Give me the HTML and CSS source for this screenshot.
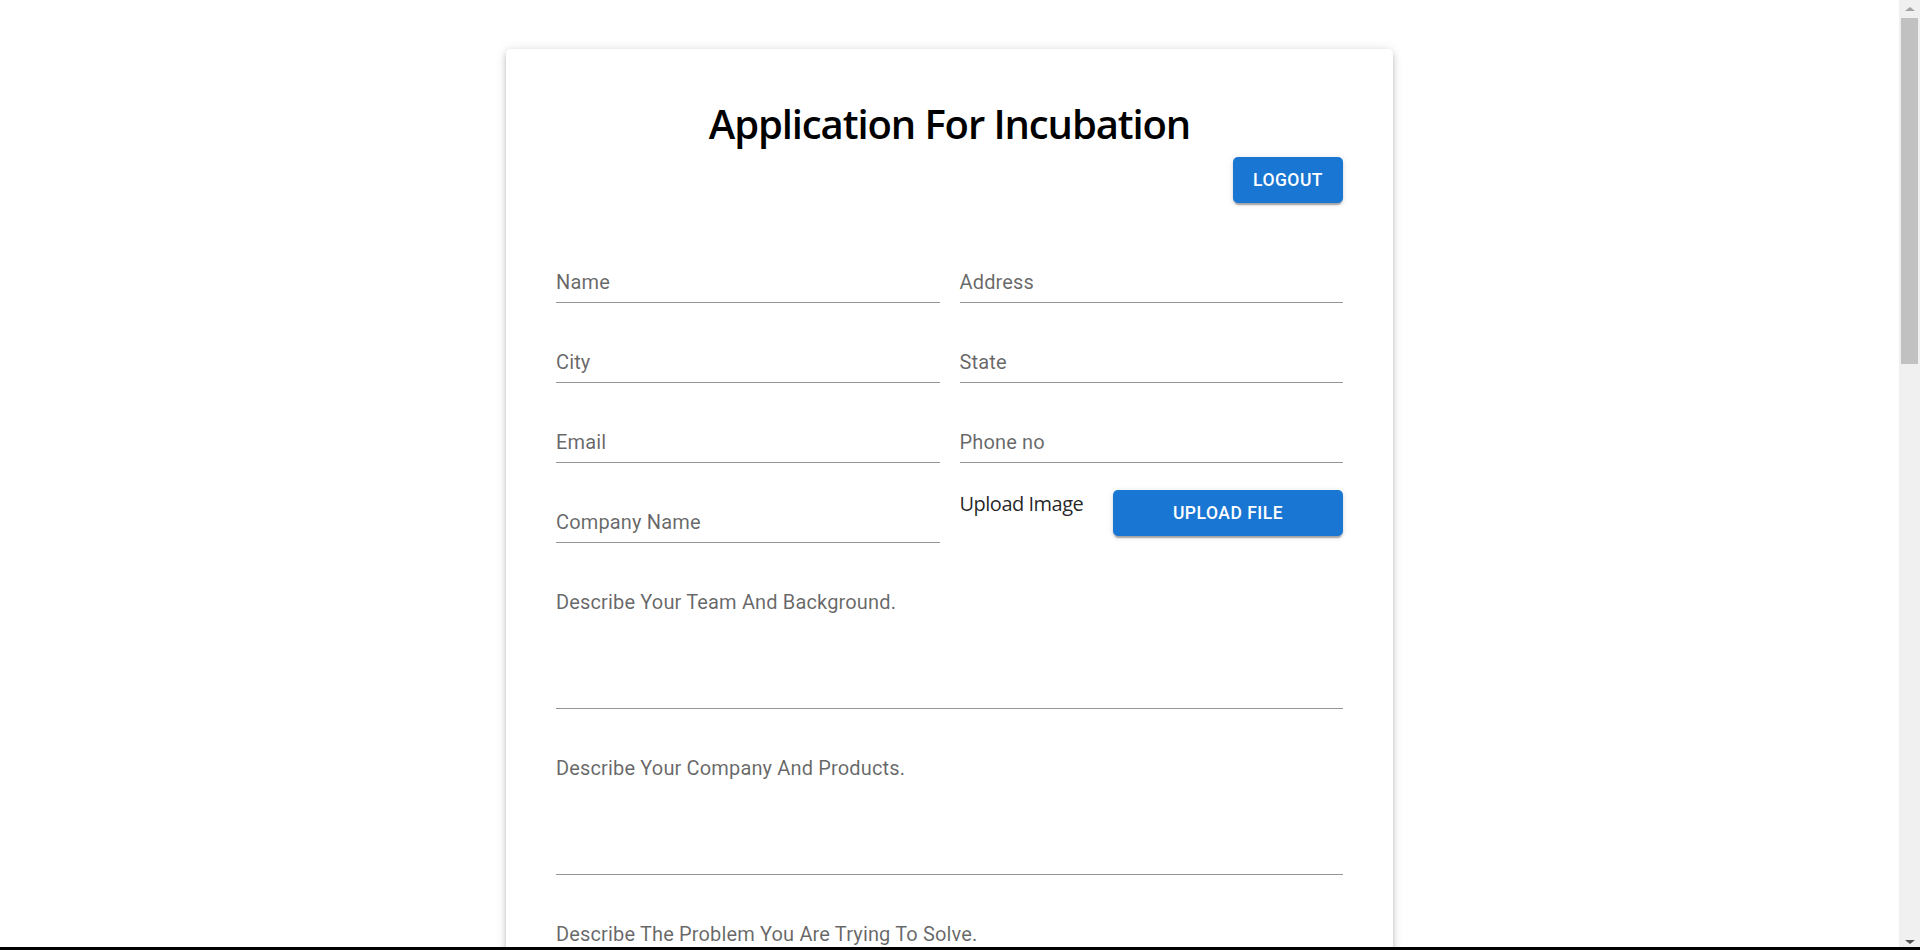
FILE: index.html
```html
<!DOCTYPE html>
<html lang="en">
<head>
<meta charset="utf-8">
<title>Application For Incubation</title>
<link rel="stylesheet" href="styles.css">
</head>
<body>
<div class="page">
  <main class="card">
    <h1 class="title">Application For Incubation</h1>
    <div class="actions">
      <button class="btn btn-logout" type="button">Logout</button>
    </div>
    <form class="form">
      <div class="field"><span class="label">Name</span></div>
      <div class="field"><span class="label">Address</span></div>
      <div class="field"><span class="label">City</span></div>
      <div class="field"><span class="label">State</span></div>
      <div class="field"><span class="label">Email</span></div>
      <div class="field"><span class="label">Phone no</span></div>
      <div class="field"><span class="label">Company Name</span></div>
      <div class="upload">
        <span class="upload-label">Upload Image</span>
        <button class="btn btn-upload" type="button">Upload File</button>
      </div>
      <div class="field multi"><span class="label">Describe Your Team And Background.</span></div>
      <div class="field multi"><span class="label">Describe Your Company And Products.</span></div>
      <div class="field multi"><span class="label">Describe The Problem You Are Trying To Solve.</span></div>
      <div class="field multi"><span class="label">What Is Unique About Your Solution?</span></div>
    </form>
  </main>
</div>
<div class="scrollbar">
  <div class="sb-arrow sb-up"></div>
  <div class="sb-track"><div class="sb-thumb"></div></div>
  <div class="sb-arrow sb-down"></div>
</div>
<div class="bottom-edge"></div>
</body>
</html>
```
FILE: styles.css
```css
html, body {
  margin: 0;
  padding: 0;
  height: 100%;
  overflow: hidden;
  background: #ffffff;
}

body {
  font-family: "Open Sans", "Noto Sans", sans-serif;
}

.page {
  width: calc(100% - 21px);
  height: 100%;
}

.card {
  width: 887px;
  box-sizing: border-box;
  margin: 49px auto 0;
  padding: 50px 50px 60px;
  background: #fff;
  border-radius: 5px;
  box-shadow: 0 3px 4px -2px rgba(0,0,0,0.2), 0 3px 6px 0 rgba(0,0,0,0.14), 0 1px 12px 0 rgba(0,0,0,0.12);
}

.title {
  margin: 0;
  text-align: center;
  font-family: "Open Sans", "Noto Sans", sans-serif;
  font-size: 40px;
  line-height: 48px;
  font-weight: 600;
  letter-spacing: -1.1px;
  color: #000;
  position: relative;
  top: 1px;
}

.actions {
  display: flex;
  justify-content: flex-end;
  margin-top: 10px;
}

.btn {
  display: flex;
  align-items: center;
  justify-content: center;
  height: 46px;
  padding: 0 20px;
  border: 0;
  border-radius: 5px;
  background: #1976d2;
  color: #fff;
  font-family: Roboto, "Liberation Sans", sans-serif;
  font-weight: 500;
  font-size: 17.5px;
  letter-spacing: 0.5px;
  text-transform: uppercase;
  box-shadow: 0 4px 1px -2px rgba(0,0,0,0.2), 0 2px 2px 0 rgba(0,0,0,0.14), 0 1px 6px 0 rgba(0,0,0,0.12);
  cursor: pointer;
}

.btn-logout {
  width: 110px;
}

.btn-upload {
  width: 230px;
}

.form {
  display: grid;
  grid-template-columns: 1fr 1fr;
  column-gap: 20px;
  row-gap: 19px;
  margin-top: 39px;
}

.field {
  padding: 29px 0 8px;
  border-bottom: 1px solid rgba(0,0,0,0.42);
}

.field.multi {
  grid-column: span 2;
  padding-bottom: 94px;
}

.label {
  display: block;
  font-family: Roboto, "Liberation Sans", sans-serif;
  font-size: 20px;
  line-height: 23px;
  letter-spacing: 0.15px;
  color: rgba(0,0,0,0.6);
}

.upload {
  display: flex;
  justify-content: space-between;
  align-items: flex-start;
  padding-top: 8px;
}

.upload-label {
  font-family: "Open Sans", "Noto Sans", sans-serif;
  font-size: 20px;
  line-height: 27px;
  letter-spacing: -0.5px;
  color: rgba(0,0,0,0.87);
}

.scrollbar {
  position: fixed;
  top: 0;
  right: 0;
  width: 21px;
  height: 100%;
  background: #f0f0f0;
  display: flex;
  flex-direction: column;
}

.sb-arrow {
  height: 17px;
  display: flex;
  align-items: center;
  justify-content: center;
}

.sb-up::before {
  content: "";
  border-left: 5px solid transparent;
  border-right: 5px solid transparent;
  border-bottom: 4px solid #a3a3a3;
}

.sb-down::before {
  content: "";
  border-left: 5px solid transparent;
  border-right: 5px solid transparent;
  border-top: 4px solid #505050;
}

.sb-track {
  flex: 1;
  padding: 1px 2px 0 2px;
}

.sb-thumb {
  height: 346px;
  background: #c1c1c1;
}

.bottom-edge {
  position: fixed;
  left: 0;
  right: 0;
  bottom: 0;
  height: 3px;
  background: #000;
}
```
